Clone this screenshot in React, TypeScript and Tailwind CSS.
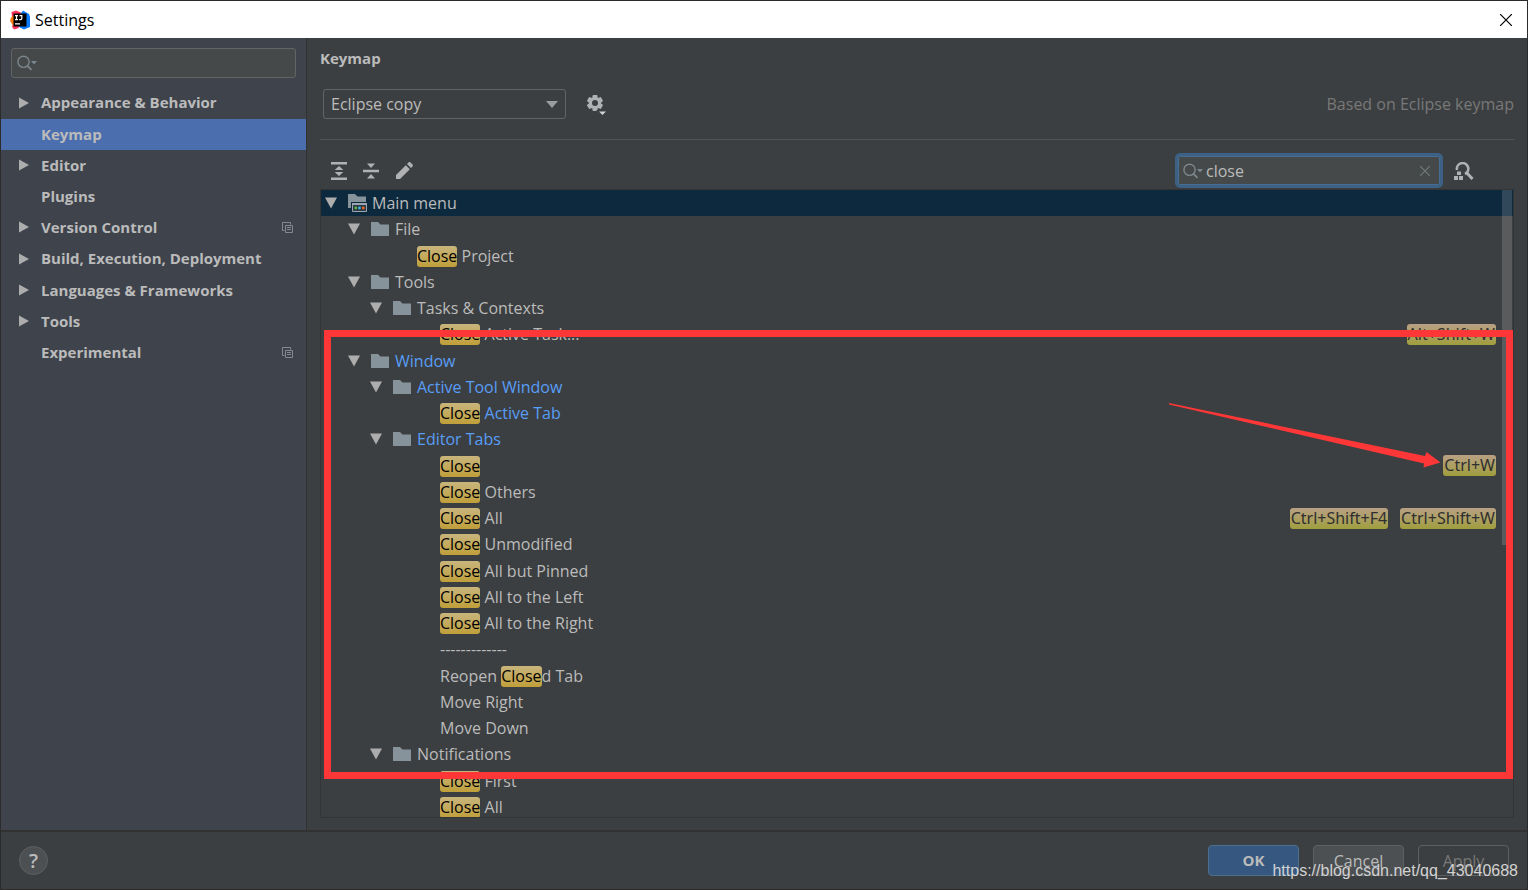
import { useState } from "react";
import clsx from "clsx";

type TreeRow = {
  level: 0 | 1 | 2 | 3;
  label: string;
  folder?: boolean;
  changed?: boolean;
  shortcuts?: string[];
};

const categories = [
  { label: "Appearance & Behavior", expandable: true },
  { label: "Keymap" },
  { label: "Editor", expandable: true },
  { label: "Plugins" },
  { label: "Version Control", expandable: true, project: true },
  { label: "Build, Execution, Deployment", expandable: true },
  { label: "Languages & Frameworks", expandable: true },
  { label: "Tools", expandable: true },
  { label: "Experimental", project: true },
];

const rows: TreeRow[] = [
  { level: 0, label: "Main menu", folder: true },
  { level: 1, label: "File", folder: true },
  { level: 2, label: "Close Project" },
  { level: 1, label: "Tools", folder: true },
  { level: 2, label: "Tasks & Contexts", folder: true },
  { level: 3, label: "Close Active Task...", shortcuts: ["Alt+Shift+W"] },
  { level: 1, label: "Window", folder: true, changed: true },
  { level: 2, label: "Active Tool Window", folder: true, changed: true },
  { level: 3, label: "Close Active Tab", changed: true },
  { level: 2, label: "Editor Tabs", folder: true, changed: true },
  { level: 3, label: "Close", shortcuts: ["Ctrl+W"] },
  { level: 3, label: "Close Others" },
  { level: 3, label: "Close All", shortcuts: ["Ctrl+Shift+F4", "Ctrl+Shift+W"] },
  { level: 3, label: "Close Unmodified" },
  { level: 3, label: "Close All but Pinned" },
  { level: 3, label: "Close All to the Left" },
  { level: 3, label: "Close All to the Right" },
  { level: 3, label: "-------------" },
  { level: 3, label: "Reopen Closed Tab" },
  { level: 3, label: "Move Right" },
  { level: 3, label: "Move Down" },
  { level: 2, label: "Notifications", folder: true },
  { level: 3, label: "Close First" },
  { level: 3, label: "Close All" },
];

const indent = {
  0: "pl-[4px]",
  1: "pl-[27px]",
  2: "pl-[49px]",
  3: "pl-[72px]",
};

function AppLogo() {
  return (
    <svg width="20" height="20" viewBox="0 0 20 20" aria-hidden="true">
      <path d="M1.500 2 6 .5l5 2-2 14-5 2.500-2-2 1-4L1 11l1-4z" fill="#fe315d" />
      <path d="M1 7.500 4 5l3 6-3 6-2-3L0 11z" fill="#f97a12" />
      <path d="m13 .5 6 3.500 1 3v10l-6 2.500L9 17l2-14z" fill="#087cfa" />
      <path d="m3 17 4-2 2 3-5 1.500z" fill="#fe315d" />
      <rect x="3.500" y="3.500" width="13" height="13" fill="#000" />
      <path
        d="M5 5.600h3M6.500 5.600v4M5 9.600h3M9.500 5.600h2.300v3c0 .8-.5 1-1.200 1H9.200M5 13.800h5"
        stroke="#fff"
        strokeWidth="1.200"
        fill="none"
      />
    </svg>
  );
}

function SearchIcon() {
  return (
    <svg width="20" height="16" viewBox="0 0 20 16" className="shrink-0" aria-hidden="true">
      <circle cx="6.500" cy="6.800" r="5.600" fill="none" stroke="#7c878d" strokeWidth="1.400" />
      <path d="m10.500 10.800 4 4" stroke="#7c878d" strokeWidth="1.700" />
      <path d="M14 6h6l-3 3.400z" fill="#7c878d" />
    </svg>
  );
}

function RightArrow() {
  return (
    <svg width="10" height="12" viewBox="0 0 10 12" aria-hidden="true">
      <path d="M0 .5 10 6 0 11.500z" fill="#adadad" />
    </svg>
  );
}

function DownArrow() {
  return (
    <svg width="12" height="12" viewBox="0 0 12 12" className="mr-[11px] shrink-0" aria-hidden="true">
      <path d="M0 .5h12L6 11.500z" fill="#adadad" />
    </svg>
  );
}

function ProjectIcon() {
  return (
    <svg width="11" height="11" viewBox="0 0 11 11" fill="none" stroke="#7f8b91" aria-label="For current project">
      <path d="M2.500 8.500h-2v-8h8v2" />
      <path d="M3.500 3.500h7v7h-7zM5 5.500h4M5 7.500h4" />
    </svg>
  );
}

function FolderIcon() {
  return (
    <svg width="18" height="14" viewBox="0 0 18 14" className="mr-[6px] shrink-0" aria-hidden="true">
      <path d="M0 0h7l2.500 2.600H18V14H0z" fill="#87939a" />
    </svg>
  );
}

function MenuFolderIcon() {
  return (
    <svg width="19" height="18" viewBox="0 0 19 18" className="mr-[5px] shrink-0" aria-hidden="true">
      <path d="M0 0h7l2.500 2.600H18V8H3v6H0z" fill="#87939a" />
      <path d="M4.500 9.500h14v8h-14z" fill="#2b3a44" stroke="#9aa7b0" />
      <path d="M4 9h15v2H4z" fill="#9aa7b0" />
      <circle cx="7.800" cy="14" r="1.400" fill="#62b543" />
      <circle cx="11.500" cy="14" r="1.400" fill="#40b6e0" />
      <circle cx="15.300" cy="14" r="1.400" fill="#f26522" />
    </svg>
  );
}

function GearIcon() {
  return (
    <svg width="20" height="21" viewBox="0 0 20 21" aria-hidden="true">
      <g fill="#afb1b3">
        <path d="M5.800 0h4.400l.6 3v10l-.6 3H5.800l-.6-3V3z" />
        <path d="M5.800 0h4.400l.6 3v10l-.6 3H5.800l-.6-3V3z" transform="rotate(60 8 8)" />
        <path d="M5.800 0h4.400l.6 3v10l-.6 3H5.800l-.6-3V3z" transform="rotate(120 8 8)" />
        <circle cx="8" cy="8" r="5.800" />
      </g>
      <circle cx="8" cy="8" r="3" fill="#3c3f41" />
      <path d="M11.500 16h8l-4 4z" fill="#3c3f41" stroke="#3c3f41" strokeWidth="2" />
      <path d="M12 16.500h7L15.500 20z" fill="#d0d2d4" />
    </svg>
  );
}

function ExpandIcon() {
  return (
    <svg width="16" height="18" viewBox="0 0 16 18" fill="#afb1b3" aria-hidden="true">
      <path d="M0 0h16v2.500H0zM0 15.500h16V18H0zM8 4l4.300 4H3.700zM8 14l4.300-4H3.700z" />
    </svg>
  );
}

function CollapseIcon() {
  return (
    <svg width="16" height="16" viewBox="0 0 16 16" fill="#afb1b3" aria-hidden="true">
      <path d="M0 6.800h16v2.500H0zM8 5 12 .500H4zM8 11l4 4.500H4z" />
    </svg>
  );
}

function PencilIcon() {
  return (
    <svg width="17" height="17" viewBox="0 0 17 17" fill="#afb1b3" aria-hidden="true">
      <path d="M0 13 9.800 3.200l4 4L4 17H0zM11 2 12.500.500c.6-.6 1.400-.6 2 0l2 2c.6.6.6 1.400 0 2L15 6z" />
    </svg>
  );
}

function FindShortcutIcon() {
  return (
    <svg width="20" height="18" viewBox="0 0 20 18" aria-hidden="true">
      <path d="M3 8A5.700 5.700 0 1 1 11 12" fill="none" stroke="#afb1b3" strokeWidth="2.600" />
      <path d="m12.500 10.500 6 6.500" stroke="#afb1b3" strokeWidth="3" />
      <path d="M3 9.500h4v3.500H3zM0 14h4v4H0zM5 14h4v4H5z" fill="#afb1b3" />
    </svg>
  );
}

function Highlighted({ text }: { text: string }) {
  return (
    <span className="whitespace-pre">
      {text.split(/(Close)/).map((part, i) =>
        part === "Close" ? (
          <mark
            key={i}
            className="inline-block h-[21px] rounded-[3px] bg-linear-to-b from-[#c9b57c] to-[#bf9f38] leading-[21px] text-black"
          >
            {part}
          </mark>
        ) : (
          part
        )
      )}
    </span>
  );
}

function KeymapTree() {
  return (
    <div className="relative flex flex-1 flex-col border border-[#323435]">
      <div className="flex flex-1 flex-col overflow-hidden">
        <ul role="tree" aria-label="Actions" className="-mb-[3px] grid flex-1 auto-rows-fr">
          {rows.map((row, i) => (
            <li
              key={i}
              role="treeitem"
              aria-selected={i === 0}
              className={clsx(
                "flex min-h-[26px] items-center pr-[17px]",
                indent[row.level],
                i === 0 && "bg-[#0d293e]",
                row.changed ? "text-[#589df6]" : "text-[#bbbbbb]"
              )}
            >
              {row.folder ? <DownArrow /> : <span className="w-[47px] shrink-0" />}
              {row.folder && (row.level === 0 ? <MenuFolderIcon /> : <FolderIcon />)}
              <Highlighted text={row.label} />
              <span className="ml-auto flex gap-3">
                {row.shortcuts?.map((keys) => (
                  <kbd
                    key={keys}
                    className="h-[21px] rounded-[3px] bg-linear-to-b from-[#b9a083] to-[#a09e3b] px-px font-['Noto_Sans',sans-serif] leading-[21px] text-[#2f2f2f]"
                  >
                    {keys}
                  </kbd>
                ))}
              </span>
            </li>
          ))}
        </ul>
      </div>
      <div className="absolute top-0 right-px h-[355px] w-[10px] bg-white/15" />

      {/* Callout frame and arrow */}
      <div className="pointer-events-none absolute top-[140px] right-0 bottom-[38px] left-[3px] border-[7px] border-[#fd3737]" />
      <svg
        width="272"
        height="66"
        viewBox="0 0 272 66"
        className="pointer-events-none absolute top-[213px] right-[72px]"
        aria-hidden="true"
      >
        <path d="M0 0 256 53l1.500-4L271.500 59.500 254.500 64.500l.5-4L0 1.500z" fill="#fd3737" />
      </svg>
    </div>
  );
}

export default function App() {
  const [selected, setSelected] = useState("Keymap");
  const [query, setQuery] = useState("close");

  return (
    <div className="flex min-h-screen flex-col border border-[#2b2b2b] bg-[#3c3f41] font-['Open_Sans',sans-serif] text-base text-[#bbbbbb]">
      <header className="flex h-[37px] items-center bg-white pr-[15px] pl-[9px] text-black">
        <AppLogo />
        <h1 className="ml-[5px] text-base">Settings</h1>
        <button type="button" aria-label="Close window" className="ml-auto">
          <svg width="12" height="12" viewBox="0 0 12 12" stroke="#000" strokeWidth="1.200">
            <path d="m0 0 12 12M12 0 0 12" />
          </svg>
        </button>
      </header>

      <div className="flex flex-1">
        <nav className="w-[306px] shrink-0 border-r border-[#323232] bg-[#3e434c]">
          <label className="mx-[10px] my-[10px] flex h-[30px] items-center rounded-[3px] border border-[#646464] bg-[#45494a] px-[5px]">
            <SearchIcon />
            <input aria-label="Search settings" className="min-w-0 flex-1 bg-transparent outline-none" />
          </label>
          <ul className="grid h-[281px] auto-rows-fr text-[15px] font-bold">
            {categories.map((item) => (
              <li key={item.label} className="flex">
                <button
                  type="button"
                  onClick={() => setSelected(item.label)}
                  className={clsx(
                    "flex flex-1 items-center pr-[13px] pb-[2px] pl-[18px]",
                    selected === item.label && "bg-[#4b6eaf]"
                  )}
                >
                  <span className="w-[22px]">{item.expandable && <RightArrow />}</span>
                  <span className="mr-auto">{item.label}</span>
                  {item.project && <ProjectIcon />}
                </button>
              </li>
            ))}
          </ul>
        </nav>

        <main className="flex min-w-0 flex-1 flex-col pt-[9px] pr-[13px] pb-[12px] pl-[13px]">
          <h2 className="text-[15px] leading-[22px] font-bold">Keymap</h2>

          <div className="mt-5 flex h-[30px] items-center pl-[3px]">
            <div className="relative">
              <select
                aria-label="Keymap scheme"
                className="h-[30px] w-[243px] appearance-none rounded-[3px] border border-[#646464] bg-transparent pl-[7px]"
              >
                <option>Eclipse copy</option>
              </select>
              <svg
                width="12"
                height="7"
                viewBox="0 0 12 7"
                className="pointer-events-none absolute top-3 right-2"
                aria-hidden="true"
              >
                <path d="M0 0h12L6 7z" fill="#9a9da0" />
              </svg>
            </div>
            <button type="button" aria-label="Scheme actions" className="ml-[21px] pt-[2px]">
              <GearIcon />
            </button>
            <p className="ml-auto text-[#787878]">Based on Eclipse keymap</p>
          </div>

          <hr className="mt-5 border-[#515354]" />

          <div className="flex items-center pt-[13px] pb-px pl-[11px]">
            <button type="button" aria-label="Expand all">
              <ExpandIcon />
            </button>
            <button type="button" aria-label="Collapse all" className="ml-4">
              <CollapseIcon />
            </button>
            <button type="button" aria-label="Edit shortcut" className="ml-[17px]">
              <PencilIcon />
            </button>
            <label className="ml-auto flex h-[35px] w-[268px] items-center rounded-[5px] border-[3px] border-[#3d6185] bg-[#45494a] pr-[10px] pl-[5px] ring-1 ring-[#466d94] ring-inset">
              <SearchIcon />
              <input
                aria-label="Search actions"
                value={query}
                onChange={(e) => setQuery(e.target.value)}
                className="ml-[3px] min-w-0 flex-1 bg-transparent outline-none"
              />
              <button type="button" aria-label="Clear search" onClick={() => setQuery("")}>
                <svg width="10" height="10" viewBox="0 0 10 10" stroke="#73787a" strokeWidth="1.200">
                  <path d="m0 0 10 10M10 0 0 10" />
                </svg>
              </button>
            </label>
            <button type="button" aria-label="Find by shortcut" className="mr-[40px] ml-[11px]">
              <FindShortcutIcon />
            </button>
          </div>

          <KeymapTree />
        </main>
      </div>

      <footer className="relative flex h-[59px] items-center border-t-2 border-[#323232] px-[18px]">
        <button
          type="button"
          aria-label="Help"
          className="flex size-[29px] items-center justify-center rounded-full border border-[#5e6060] bg-[#4c5052] text-xl font-semibold"
        >
          ?
        </button>
        <div className="ml-auto flex gap-[14px]">
          <button
            type="button"
            className="h-[31px] w-[91px] rounded-[4px] border border-[#4c708c] bg-[#365880] text-[15px] font-bold"
          >
            OK
          </button>
          <button type="button" className="h-[31px] w-[91px] rounded-[4px] border border-[#5e6060] bg-[#4c5052]">
            Cancel
          </button>
          <button
            type="button"
            disabled
            className="h-[31px] w-[91px] rounded-[4px] border border-[#5e6060] text-[#777777]"
          >
            Apply
          </button>
        </div>
        <span className="pointer-events-none absolute right-[9px] bottom-[6px] font-['Liberation_Sans',sans-serif] text-base text-[#d2d2d2]">
          https://blog.csdn.net/qq_43040688
        </span>
      </footer>
    </div>
  );
}
